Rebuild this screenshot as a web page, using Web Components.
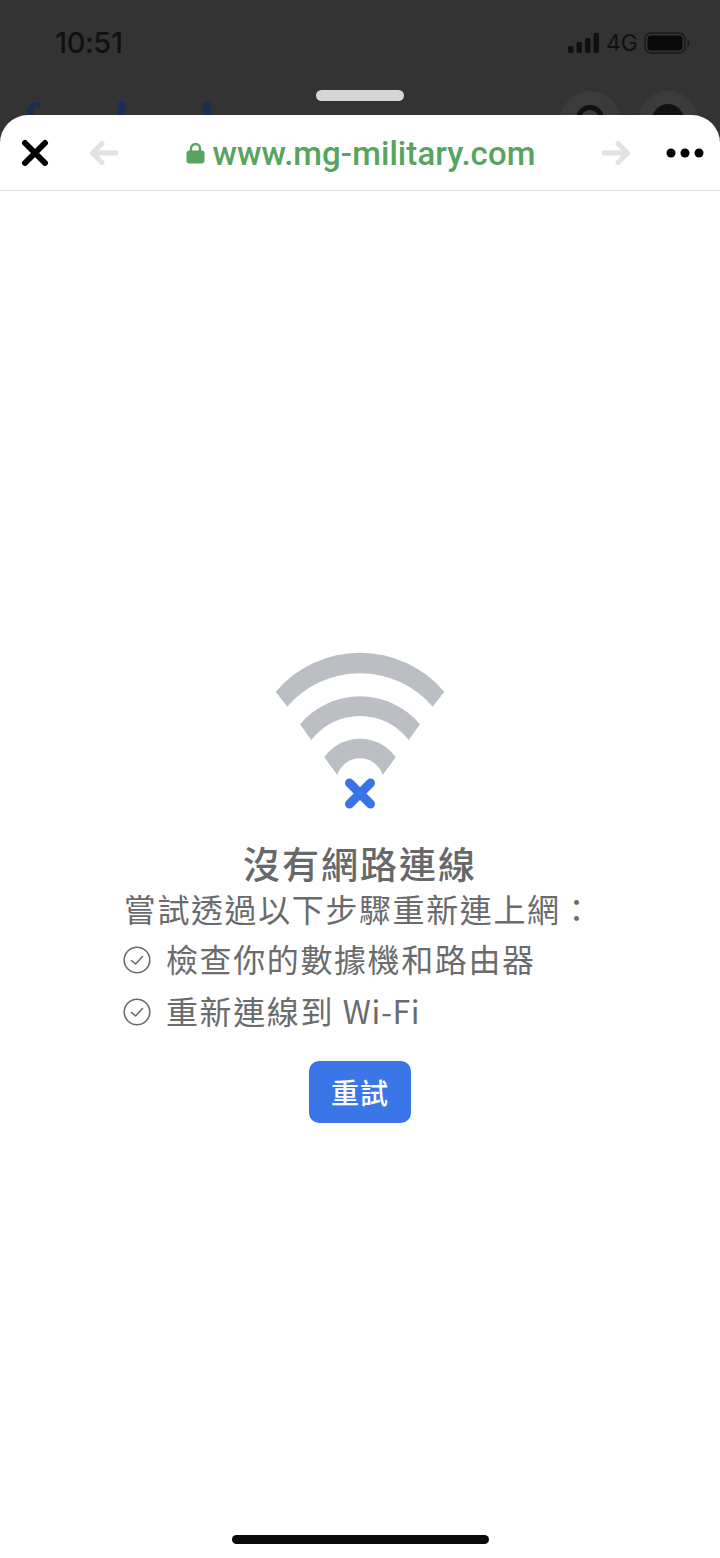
<!DOCTYPE html>
<html lang="zh-Hant"><head><meta charset="utf-8"><title>沒有網路連線</title>
<style>html,body{margin:0;padding:0;background:#333}</style></head>
<body>
<phone-frame>
  <status-peek slot="top"></status-peek>
  <browser-bar url="www.mg-military.com"></browser-bar>
  <offline-state>
    <check-item>檢查你的數據機和路由器</check-item>
    <check-item>重新連線到 <span style="letter-spacing:.6px">Wi-Fi</span></check-item>
  </offline-state>
</phone-frame>
<script>
function def(name, html){
  customElements.define(name, class extends HTMLElement{
    constructor(){super();this.attachShadow({mode:'open'}).innerHTML=html;}
    connectedCallback(){ if(this.hasAttribute('url')){const u=this.shadowRoot.querySelector('.u'); if(u) u.textContent=this.getAttribute('url');} }
  });
}
def('phone-frame',`<style>
:host{display:flex;flex-direction:column;width:720px;height:1558px;overflow:hidden;background:#333;font-family:"Noto Sans CJK TC",sans-serif}
.sheet{flex:1;display:flex;flex-direction:column;background:#fff;border-radius:28px 28px 0 0;position:relative;z-index:1}
.home{width:257px;height:9px;border-radius:5px;background:#0a0a0a;margin:0 auto 14px}
.main{flex:1;display:flex;flex-direction:column}
</style><slot name="top"></slot><div class="sheet"><div class="main"><slot></slot></div><div class="home"></div></div>`);
def('status-peek',`<style>
:host{display:block;height:115px;position:relative;overflow:hidden;background:#333}
.row{display:flex;justify-content:space-between;align-items:center;height:30px;padding:28px 30px 0 55px}
.t{font:500 29px/30px Inter,"Liberation Sans",sans-serif;color:#111;letter-spacing:-.4px}
.r{display:flex;align-items:center}
.sig{margin-right:6px}
.g{font:400 23px/30px Inter,"Liberation Sans",sans-serif;color:#111;margin-right:6px}
.tip{position:absolute;top:102px;height:14px;background:#1a2d52}
.t1{left:27px;width:13px;border-radius:10px 0 0 0;clip-path:polygon(0 100%,0 35%,30% 0,100% 0,100% 30%,55% 40%,50% 100%)}
.t2{left:118px;width:7px}
.t3{left:203px;width:8px}
.h{position:absolute;left:316px;top:90px;width:88px;height:11px;border-radius:6px;background:#d6d6d6}
.c{position:absolute;top:91px;width:60px;height:60px;border-radius:50%;background:#3b3b3b}
.c1{left:560px}.c2{left:638px}
.c1 i{position:absolute;left:16px;top:14px;width:18px;height:18px;border:5px solid #111;border-radius:50%}
.c2 i{position:absolute;left:14px;top:13px;width:32px;height:32px;background:#111;border-radius:50%}
</style>
<div class="row"><span class="t">10:51</span><span class="r">
<svg class="sig" width="32" height="20" viewBox="0 0 32 20"><g fill="#111"><rect x="0" y="13" width="5.500" height="7" rx="1.200"/><rect x="8.500" y="9" width="5.500" height="11" rx="1.200"/><rect x="17" y="5" width="5.500" height="15" rx="1.200"/><rect x="25.500" y="0" width="5.500" height="20" rx="1.200"/></g></svg>
<span class="g">4G</span>
<svg width="46" height="22" viewBox="0 0 46 22"><rect x="1" y="1" width="40" height="20" rx="6" fill="none" stroke="#1b1b1b" stroke-width="1.600"/><rect x="3.500" y="3.500" width="35" height="15" rx="3.500" fill="#0a0a0a"/><path d="M43.500 7.500c1.600.6 2 2 2 3.500s-.4 2.900-2 3.500z" fill="#1b1b1b"/></svg>
</span></div>
<div class="tip t1"></div><div class="tip t2"></div><div class="tip t3"></div>
<div class="c c1"><i></i></div><div class="c c2"><i></i></div>
<div class="h"></div>`);
def('browser-bar',`<style>
:host{display:flex;align-items:center;height:75px;border-bottom:1px solid #dcdcdc;position:relative}
.x{margin-left:21px;width:28px;height:28px}
.b{margin-left:40px;width:30px;height:24px}
.mid{flex:1;display:flex;justify-content:center;align-items:center;gap:8px;margin-left:1px}
.u{font:500 32.900px/40px Roboto,"Liberation Sans",sans-serif;color:#56a45d;letter-spacing:.1px;position:relative;top:1px}
.f{width:30px;height:24px}
.d{margin:0 16px 0 35px;width:38px;height:10px}
</style>
<svg class="x" viewBox="0 0 28 28"><path d="M4 4 24 24M24 4 4 24" stroke="#000" stroke-width="6" stroke-linecap="round"/></svg>
<svg class="b" viewBox="0 0 30 24"><path d="M27 12H4M13 2.500 3.500 12 13 21.500" fill="none" stroke="#e1e2e4" stroke-width="5" stroke-linecap="round" stroke-linejoin="round"/></svg>
<div class="mid">
<svg width="19" height="22" viewBox="0 0 19 22"><path d="M5 9V6.500a4.500 4.500 0 0 1 9 0V9" fill="none" stroke="#56a45d" stroke-width="2.400"/><rect x="0.500" y="8.500" width="18" height="13" rx="3" fill="#56a45d"/></svg>
<span class="u"></span></div>
<svg class="f" viewBox="0 0 30 24"><path d="M3 12H26M17 2.500 26.500 12 17 21.500" fill="none" stroke="#e1e2e4" stroke-width="5" stroke-linecap="round" stroke-linejoin="round"/></svg>
<svg class="d" viewBox="0 0 38 10"><circle cx="5" cy="5" r="4.500"/><circle cx="19" cy="5" r="4.500"/><circle cx="33" cy="5" r="4.500"/></svg>`);
def('offline-state',`<style>
:host{display:flex;flex-direction:column;align-items:center;padding-top:459px;color:#6a6b6d}
svg{display:block;width:180px;height:160px}
h1{margin:28px 0 0;font:500 37px/50px "Noto Sans CJK TC",sans-serif;letter-spacing:2px;color:#67686a}
p{margin:-2px 0 0 -2px;font:400 32px/44px "Noto Sans CJK TC",sans-serif;letter-spacing:1.600px;white-space:nowrap}
.list{align-self:flex-start;margin:6px 0 0 123px;display:flex;flex-direction:column;gap:8px}
button{margin-top:29px;width:102px;height:62px;border:0;border-radius:10px;background:#3b76e8;color:#fff;font:500 28px/36px "Noto Sans CJK TC",sans-serif;letter-spacing:1px;padding:0}
</style>
<svg viewBox="270 650 180 160">
<g fill="#bbbec2">
<path d="M275.700 691.700A110.600 110.600 0 0 1 444.300 691.700L432.700 706.700A95.800 95.800 0 0 0 287.300 706.700Z"/>
<path d="M300 724.300A78.400 78.400 0 0 1 420 724.300L408.700 740A61.400 61.400 0 0 0 311.300 740Z"/>
<path d="M324.300 757.300A43.500 43.500 0 0 1 395.700 757.300L382.700 775A23.800 23.800 0 0 0 337.300 775Z"/>
</g>
<path d="M349.500 783 370.500 804M370.500 783 349.500 804" stroke="#3a73e4" stroke-width="9" stroke-linecap="round"/>
</svg>
<h1>沒有網路連線</h1>
<p>嘗試透過以下步驟重新連上網：</p>
<div class="list"><slot></slot></div>
<button>重試</button>`);
def('check-item',`<style>
:host{display:flex;align-items:center;gap:15px;height:44px;font:400 32px/44px "Noto Sans CJK TC",sans-serif;letter-spacing:1.600px;color:#6a6b6d;white-space:nowrap}
svg{width:28px;height:28px;flex:none;margin-top:4px}
</style>
<svg viewBox="0 0 28 28"><circle cx="14" cy="14" r="12.800" fill="none" stroke="#6a6b6d" stroke-width="1.600"/><path d="M8.500 14.500 12.500 18 19.500 10.500" fill="none" stroke="#6a6b6d" stroke-width="1.600" stroke-linecap="round" stroke-linejoin="round"/></svg>
<span><slot></slot></span>`);
</script>
</body></html>
